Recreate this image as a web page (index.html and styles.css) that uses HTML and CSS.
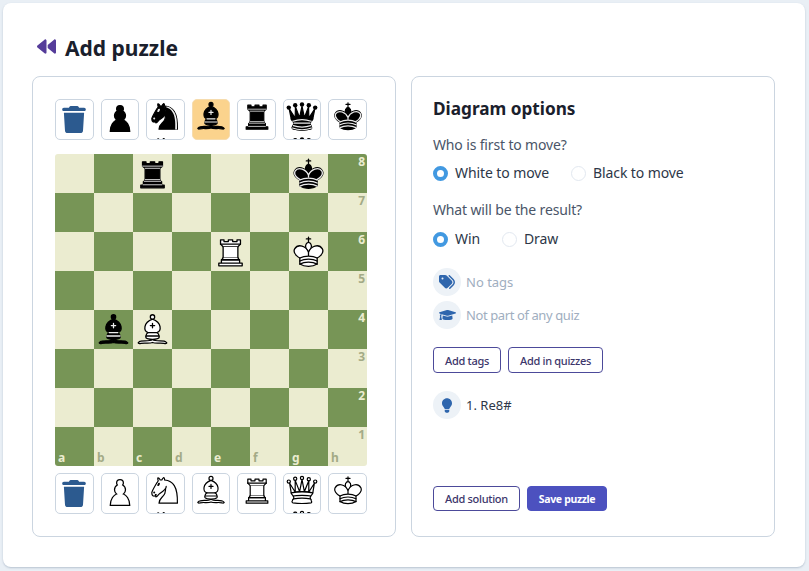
FILE: index.html
```html
<!DOCTYPE html>
<html lang="en">
<head>
<meta charset="utf-8">
<title>Add puzzle</title>
<link rel="stylesheet" href="styles.css">
</head>
<body>
<svg class="defs" width="0" height="0" aria-hidden="true">
  <symbol id="wP" viewBox="0 0 45 45"><path fill="#fff" stroke="#000" stroke-linecap="round" stroke-width="1.5" d="M22.5 9c-2.21 0-4 1.79-4 4 0 .89.29 1.71.78 2.38C17.33 16.5 16 18.59 16 21c0 2.03.94 3.84 2.41 5.03-3 1.06-7.41 5.55-7.41 13.47h23c0-7.92-4.41-12.41-7.41-13.47 1.47-1.19 2.41-3 2.41-5.03 0-2.41-1.33-4.5-3.28-5.62.49-.67.78-1.49.78-2.38 0-2.21-1.79-4-4-4z"/></symbol>
  <symbol id="bP" viewBox="0 0 45 45"><path fill="#000" stroke="#000" stroke-linecap="round" stroke-width="1.5" d="M22.5 9c-2.21 0-4 1.79-4 4 0 .89.29 1.71.78 2.38C17.33 16.5 16 18.59 16 21c0 2.03.94 3.84 2.41 5.03-3 1.06-7.41 5.55-7.41 13.47h23c0-7.92-4.41-12.41-7.41-13.47 1.47-1.19 2.41-3 2.41-5.03 0-2.41-1.33-4.5-3.28-5.62.49-.67.78-1.49.78-2.38 0-2.21-1.79-4-4-4z"/></symbol>
  <symbol id="wN" viewBox="0 0 45 45"><g fill="none" fill-rule="evenodd" stroke="#000" stroke-linecap="round" stroke-linejoin="round" stroke-width="1.5"><path fill="#fff" d="M22 10c10.5 1 16.5 8 16 29H15c0-9 10-6.5 8-21"/><path fill="#fff" d="M24 18c.38 2.91-5.55 7.37-8 9-3 2-2.82 4.34-5 4-1.042-.94 1.41-3.04 0-3-1 0 .19 1.23-1 2-1 0-4.003 1-4-4 0-2 6-12 6-12s1.89-1.9 2-3.5c-.73-.994-.5-2-.5-3 1-1 3 2.5 3 2.5h2s.78-1.992 2.5-3c1 0 1 3 1 3"/><path fill="#000" d="M9.5 25.5a.5.5 0 1 1-1 0 .5.5 0 1 1 1 0zm5.433-9.75a.5 1.5 30 1 1-.866-.5.5 1.5 30 1 1 .866.5z"/></g></symbol>
  <symbol id="bN" viewBox="0 0 45 45"><g fill="none" fill-rule="evenodd" stroke="#000" stroke-linecap="round" stroke-linejoin="round" stroke-width="1.5"><path fill="#000" d="M22 10c10.5 1 16.5 8 16 29H15c0-9 10-6.5 8-21"/><path fill="#000" d="M24 18c.38 2.91-5.55 7.37-8 9-3 2-2.82 4.34-5 4-1.042-.94 1.41-3.04 0-3-1 0 .19 1.23-1 2-1 0-4.003 1-4-4 0-2 6-12 6-12s1.89-1.9 2-3.5c-.73-.994-.5-2-.5-3 1-1 3 2.5 3 2.5h2s.78-1.992 2.5-3c1 0 1 3 1 3"/><path fill="#ececec" stroke="#ececec" d="M9.5 25.5a.5.5 0 1 1-1 0 .5.5 0 1 1 1 0zm5.433-9.75a.5 1.5 30 1 1-.866-.5.5 1.5 30 1 1 .866.5z"/><path fill="#ececec" stroke="none" d="M24.55 10.4l-.45 1.45.5.15c3.15 1 5.65 2.49 7.9 6.75S35.75 29.06 35.25 39l-.05.5h2.25l.05-.5c.5-10.06-.88-16.85-3.25-21.34-2.37-4.49-5.79-6.64-9.19-7.16l-.51-.1z"/></g></symbol>
  <symbol id="wB" viewBox="0 0 45 45"><g fill="none" fill-rule="evenodd" stroke="#000" stroke-linecap="round" stroke-linejoin="round" stroke-width="1.5"><g fill="#fff" stroke-linecap="butt"><path d="M9 36c3.39-.97 10.11.43 13.5-2 3.39 2.43 10.11 1.03 13.5 2 0 0 1.65.54 3 2-.68.97-1.65.99-3 .5-3.39-.97-10.11.46-13.5-1-3.39 1.46-10.11.03-13.5 1-1.354.49-2.323.47-3-.5 1.354-1.94 3-2 3-2z"/><path d="M15 32c2.5 2.5 12.5 2.5 15 0 .5-1.5 0-2 0-2 0-2.5-2.5-4-2.5-4 5.5-1.5 6-11.5-5-15.5-11 4-10.5 14-5 15.5 0 0-2.5 1.5-2.5 4 0 0-.5.5 0 2z"/><path d="M25 8a2.5 2.5 0 1 1-5 0 2.5 2.5 0 1 1 5 0z"/></g><path stroke-linejoin="miter" d="M17.5 26h10M15 30h15m-7.5-14.5v5M20 18h5"/></g></symbol>
  <symbol id="bB" viewBox="0 0 45 45"><g fill="none" fill-rule="evenodd" stroke="#000" stroke-linecap="round" stroke-linejoin="round" stroke-width="1.5"><g fill="#000" stroke-linecap="butt"><path d="M9 36c3.39-.97 10.11.43 13.5-2 3.39 2.43 10.11 1.03 13.5 2 0 0 1.65.54 3 2-.68.97-1.65.99-3 .5-3.39-.97-10.11.46-13.5-1-3.39 1.46-10.11.03-13.5 1-1.354.49-2.323.47-3-.5 1.354-1.94 3-2 3-2z"/><path d="M15 32c2.5 2.5 12.5 2.5 15 0 .5-1.5 0-2 0-2 0-2.5-2.5-4-2.5-4 5.5-1.5 6-11.5-5-15.5-11 4-10.5 14-5 15.5 0 0-2.5 1.5-2.5 4 0 0-.5.5 0 2z"/><path d="M25 8a2.5 2.5 0 1 1-5 0 2.5 2.5 0 1 1 5 0z"/></g><path stroke="#ececec" stroke-linejoin="miter" d="M17.5 26h10M15 30h15m-7.5-14.5v5M20 18h5"/></g></symbol>
  <symbol id="wR" viewBox="0 0 45 45"><g fill="#fff" fill-rule="evenodd" stroke="#000" stroke-linecap="round" stroke-linejoin="round" stroke-width="1.5"><path stroke-linecap="butt" d="M9 39h27v-3H9v3zm3-3v-4h21v4H12zm-1-22V9h4v2h5V9h5v2h5V9h4v5"/><path d="M34 14l-3 3H14l-3-3"/><path stroke-linecap="butt" stroke-linejoin="miter" d="M31 17v12.5H14V17"/><path d="M31 29.5l1.5 2.5h-20l1.5-2.5"/><path fill="none" stroke-linejoin="miter" d="M11 14h23"/></g></symbol>
  <symbol id="bR" viewBox="0 0 45 45"><g fill-rule="evenodd" stroke="#000" stroke-linecap="round" stroke-linejoin="round" stroke-width="1.5"><path stroke-linecap="butt" d="M9 39h27v-3H9v3zm3.5-7l1.5-2.5h17l1.5 2.5h-20zm-.5 4v-4h21v4H12z"/><path stroke-linecap="butt" stroke-linejoin="miter" d="M14 29.5v-13h17v13H14z"/><path stroke-linecap="butt" d="M14 16.5L11 14h23l-3 2.5H14zM11 14V9h4v2h5V9h5v2h5V9h4v5H11z"/><path fill="none" stroke="#ececec" stroke-linejoin="miter" stroke-width="1" d="M12 35.5h21m-20-4h19m-18-2h17m-17-13h17M11 14h23"/></g></symbol>
  <symbol id="wQ" viewBox="0 0 45 45"><g fill="#fff" fill-rule="evenodd" stroke="#000" stroke-linecap="round" stroke-linejoin="round" stroke-width="1.5"><path d="M8 12a2 2 0 1 1-4 0 2 2 0 1 1 4 0zm16.5-4.5a2 2 0 1 1-4 0 2 2 0 1 1 4 0zM41 12a2 2 0 1 1-4 0 2 2 0 1 1 4 0zM16 8.5a2 2 0 1 1-4 0 2 2 0 1 1 4 0zM33 9a2 2 0 1 1-4 0 2 2 0 1 1 4 0z"/><path stroke-linecap="butt" d="M9 26c8.5-1.5 21-1.5 27 0l2-12-7 11V11l-5.5 13.5-3-15-3 15-5.5-14V25L7 14l2 12z"/><path stroke-linecap="butt" d="M9 26c0 2 1.5 2 2.5 4 1 1.5 1 1 .5 3.5-1.5 1-1.5 2.5-1.5 2.5-1.5 1.5.5 2.5.5 2.5 6.5 1 16.5 1 23 0 0 0 1.5-1 0-2.5 0 0 .5-1.5-1-2.5-.5-2.5-.5-2 .5-3.5 1-2 2.5-2 2.5-4-8.5-1.5-18.5-1.5-27 0z"/><path fill="none" d="M11.5 30c3.5-1 18.5-1 22 0M12 33.5c6-1 15-1 21 0"/></g></symbol>
  <symbol id="bQ" viewBox="0 0 45 45"><g fill-rule="evenodd" stroke="#000" stroke-linecap="round" stroke-linejoin="round" stroke-width="1.5"><g stroke="none"><circle cx="6" cy="12" r="2.75"/><circle cx="14" cy="9" r="2.75"/><circle cx="22.5" cy="8" r="2.75"/><circle cx="31" cy="9" r="2.75"/><circle cx="39" cy="12" r="2.75"/></g><path stroke-linecap="butt" d="M9 26c8.5-1.5 21-1.5 27 0l2.5-12.5L31 25l-.3-14.1-5.2 13.6-3-14.5-3 14.5-5.2-13.6L14 25 6.5 13.5 9 26z"/><path stroke-linecap="butt" d="M9 26c0 2 1.5 2 2.5 4 1 1.5 1 1 .5 3.5-1.5 1-1.5 2.5-1.5 2.5-1.5 1.5.5 2.5.5 2.5 6.5 1 16.5 1 23 0 0 0 1.5-1 0-2.5 0 0 .5-1.5-1-2.5-.5-2.5-.5-2 .5-3.5 1-2 2.5-2 2.5-4-8.5-1.5-18.5-1.5-27 0z"/><path fill="none" stroke-linecap="butt" d="M11 38.5a35 35 1 0 0 23 0"/><path fill="none" stroke="#ececec" d="M11 29a35 35 1 0 1 23 0m-21.5 2.5h20m-21 3a35 35 1 0 0 22 0m-23 3a35 35 1 0 0 24 0"/></g></symbol>
  <symbol id="wK" viewBox="0 0 45 45"><g fill="none" fill-rule="evenodd" stroke="#000" stroke-linecap="round" stroke-linejoin="round" stroke-width="1.5"><path stroke-linejoin="miter" d="M22.5 11.63V6M20 8h5"/><path fill="#fff" stroke-linecap="butt" stroke-linejoin="miter" d="M22.5 25s4.5-7.5 3-10.5c0 0-1-2.5-3-2.5s-3 2.5-3 2.5c-1.5 3 3 10.5 3 10.5"/><path fill="#fff" d="M12.5 37c5.5 3.5 14.5 3.5 20 0v-7s9-4.5 6-10.5c-4-6.5-13.5-3.5-16 4V27v-3.5c-2.5-7.5-12-10.5-16-4-3 6 6 10.5 6 10.5v7"/><path d="M12.5 30c5.5-3 14.5-3 20 0m-20 3.5c5.5-3 14.5-3 20 0m-20 3.5c5.5-3 14.5-3 20 0"/></g></symbol>
  <symbol id="bK" viewBox="0 0 45 45"><g fill="none" fill-rule="evenodd" stroke="#000" stroke-linecap="round" stroke-linejoin="round" stroke-width="1.5"><path stroke-linejoin="miter" d="M22.5 11.63V6"/><path fill="#000" stroke-linecap="butt" stroke-linejoin="miter" d="M22.5 25s4.5-7.5 3-10.5c0 0-1-2.5-3-2.5s-3 2.5-3 2.5c-1.5 3 3 10.5 3 10.5"/><path fill="#000" d="M12.5 37c5.5 3.5 14.5 3.5 20 0v-7s9-4.5 6-10.5c-4-6.5-13.5-3.5-16 4V27v-3.5c-2.5-7.5-12-10.5-16-4-3 6 6 10.5 6 10.5v7"/><path stroke-linejoin="miter" d="M20 8h5"/><path stroke="#ececec" d="M32 29.5s8.5-4 6.03-9.65C34.15 14 25 18 22.5 24.5v2.1-2.1C20 18 10.85 14 6.97 19.85 4.5 25.5 13 29.5 13 29.5"/><path stroke="#ececec" d="M12.5 30c5.5-3 14.5-3 20 0m-20 3.5c5.5-3 14.5-3 20 0m-20 3.5c5.5-3 14.5-3 20 0"/></g></symbol>
  <symbol id="trash" viewBox="0 0 448 512"><path d="M135.2 17.7L128 32H32C14.3 32 0 46.3 0 64S14.3 96 32 96H416c17.7 0 32-14.3 32-32s-14.3-32-32-32H320l-7.2-14.3C307.4 6.8 296.3 0 284.2 0H163.8c-12.1 0-23.2 6.8-28.6 17.7zM416 128H32L53.2 467c1.6 25.3 22.6 45 47.9 45H346.9c25.3 0 46.3-19.7 47.9-45L416 128z"/></symbol>
</svg>

<main class="card">
  <h1 class="title">
    <svg class="back" viewBox="0 0 512 512" aria-hidden="true"><path d="M459.5 440.6c9.5 7.9 22.8 9.7 34.1 4.4s18.4-16.6 18.4-29V96c0-12.4-7.2-23.7-18.4-29s-24.5-3.6-34.1 4.4L288 214.3V256v41.7L459.5 440.6zM256 352V256 128 96c0-12.4-7.2-23.7-18.4-29s-24.5-3.6-34.1 4.4l-192 160C4.2 237.5 0 246.5 0 256s4.2 18.5 11.5 24.6l192 160c9.5 7.9 22.8 9.7 34.1 4.4s18.4-16.6 18.4-29V352z"/></svg>
    <span>Add puzzle</span>
  </h1>
  <div class="columns">
    <section class="panel panel-board">
      <div class="palette">
        <div class="tool"><svg class="trash"><use href="#trash"/></svg></div>
        <div class="tool"><svg class="tile tile-lg"><use href="#bP"/></svg></div>
        <div class="tool"><svg class="tile"><use href="#bN"/></svg><svg class="tile"><use href="#bN"/></svg></div>
        <div class="tool tool-on"><svg class="tile"><use href="#bB"/></svg></div>
        <div class="tool"><svg class="tile"><use href="#bR"/></svg></div>
        <div class="tool"><svg class="tile"><use href="#bQ"/></svg><svg class="tile"><use href="#bQ"/></svg></div>
        <div class="tool"><svg class="tile"><use href="#bK"/></svg></div>
      </div>
      <div class="board">
        <div class="sq l"></div><div class="sq d"></div><div class="sq l"><svg class="pc"><use href="#bR"/></svg></div><div class="sq d"></div><div class="sq l"></div><div class="sq d"></div><div class="sq l"><svg class="pc"><use href="#bK"/></svg></div><div class="sq d"><span class="rank">8</span></div>
        <div class="sq d"></div><div class="sq l"></div><div class="sq d"></div><div class="sq l"></div><div class="sq d"></div><div class="sq l"></div><div class="sq d"></div><div class="sq l"><span class="rank">7</span></div>
        <div class="sq l"></div><div class="sq d"></div><div class="sq l"></div><div class="sq d"></div><div class="sq l"><svg class="pc"><use href="#wR"/></svg></div><div class="sq d"></div><div class="sq l"><svg class="pc"><use href="#wK"/></svg></div><div class="sq d"><span class="rank">6</span></div>
        <div class="sq d"></div><div class="sq l"></div><div class="sq d"></div><div class="sq l"></div><div class="sq d"></div><div class="sq l"></div><div class="sq d"></div><div class="sq l"><span class="rank">5</span></div>
        <div class="sq l"></div><div class="sq d"><svg class="pc"><use href="#bB"/></svg></div><div class="sq l"><svg class="pc"><use href="#wB"/></svg></div><div class="sq d"></div><div class="sq l"></div><div class="sq d"></div><div class="sq l"></div><div class="sq d"><span class="rank">4</span></div>
        <div class="sq d"></div><div class="sq l"></div><div class="sq d"></div><div class="sq l"></div><div class="sq d"></div><div class="sq l"></div><div class="sq d"></div><div class="sq l"><span class="rank">3</span></div>
        <div class="sq l"></div><div class="sq d"></div><div class="sq l"></div><div class="sq d"></div><div class="sq l"></div><div class="sq d"></div><div class="sq l"></div><div class="sq d"><span class="rank">2</span></div>
        <div class="sq d"><span class="file">a</span></div><div class="sq l"><span class="file">b</span></div><div class="sq d"><span class="file">c</span></div><div class="sq l"><span class="file">d</span></div><div class="sq d"><span class="file">e</span></div><div class="sq l"><span class="file">f</span></div><div class="sq d"><span class="file">g</span></div><div class="sq l"><span class="file">h</span><span class="rank">1</span></div>
      </div>
      <div class="palette">
        <div class="tool"><svg class="trash"><use href="#trash"/></svg></div>
        <div class="tool"><svg class="tile tile-lg"><use href="#wP"/></svg></div>
        <div class="tool"><svg class="tile"><use href="#wN"/></svg><svg class="tile"><use href="#wN"/></svg></div>
        <div class="tool"><svg class="tile"><use href="#wB"/></svg></div>
        <div class="tool"><svg class="tile"><use href="#wR"/></svg></div>
        <div class="tool"><svg class="tile"><use href="#wQ"/></svg><svg class="tile"><use href="#wQ"/></svg></div>
        <div class="tool"><svg class="tile"><use href="#wK"/></svg></div>
      </div>
    </section>

    <section class="panel panel-options">
      <h2 class="heading">Diagram options</h2>
      <p class="question">Who is first to move?</p>
      <div class="radios">
        <span class="radio"><i class="dot dot-on"></i>White to move</span>
        <span class="radio"><i class="dot"></i>Black to move</span>
      </div>
      <p class="question question-next">What will be the result?</p>
      <div class="radios radios-result">
        <span class="radio"><i class="dot dot-on"></i>Win</span>
        <span class="radio"><i class="dot"></i>Draw</span>
      </div>
      <div class="meta meta-first">
        <span class="bubble"><svg class="ico ico-tag" viewBox="0 0 512 512" aria-hidden="true"><path d="M345 39.1L472.8 168.4c52.4 53 52.4 138.2 0 191.2L360.8 472.9c-9.3 9.4-24.5 9.5-33.9 .2s-9.5-24.5-.2-33.9L438.6 325.9c33.9-34.3 33.9-89.4 0-123.7L310.9 72.9c-9.3-9.4-9.2-24.6 .2-33.9s24.6-9.2 33.9 .2zM0 229.5V80C0 53.5 21.5 32 48 32H197.5c17 0 33.3 6.7 45.3 18.7l168 168c25 25 25 65.5 0 90.5L277.3 442.7c-25 25-65.5 25-90.5 0l-168-168C6.7 262.7 0 246.5 0 229.5zM144 144a32 32 0 1 0 -64 0 32 32 0 1 0 64 0z"/></svg></span>
        <span class="muted">No tags</span>
      </div>
      <div class="meta meta-second">
        <span class="bubble"><svg class="ico ico-cap" viewBox="0 0 640 512" aria-hidden="true"><path d="M622.34 153.2L343.4 67.5c-15.2-4.67-31.6-4.67-46.79 0L17.66 153.2c-23.54 7.23-23.54 38.36 0 45.59l48.63 14.94c-10.67 13.19-17.23 29.28-17.88 46.9C38.78 266.15 32 276.11 32 288c0 10.78 5.68 19.85 13.86 25.65L20.33 428.53C18.11 438.52 25.71 448 35.94 448h56.11c10.24 0 17.84-9.48 15.62-19.47L82.14 313.65C90.32 307.85 96 298.78 96 288c0-11.57-6.47-21.25-15.66-26.87.76-15.02 8.44-28.3 20.69-36.72L296.6 284.5c9.06 2.78 26.44 6.25 46.79 0l278.95-85.7c23.55-7.24 23.55-38.36 0-45.6zM352.79 315.09c-28.53 8.76-52.84 3.92-65.59 0l-145.02-44.55L128 384c0 35.35 85.96 64 192 64s192-28.65 192-64l-14.18-113.47-145.03 44.56z"/></svg></span>
        <span class="muted muted-tight">Not part of any quiz</span>
      </div>
      <div class="actions actions-meta">
        <button class="btn" type="button">Add tags</button>
        <button class="btn" type="button">Add in quizzes</button>
      </div>
      <div class="meta meta-solution">
        <span class="bubble"><svg class="ico ico-bulb" viewBox="0 0 352 512" aria-hidden="true"><path d="M96.06 454.35c.01 6.29 1.87 12.45 5.36 17.69l17.09 25.69a31.99 31.99 0 0 0 26.64 14.28h61.71a31.99 31.99 0 0 0 26.64-14.28l17.09-25.69a31.989 31.989 0 0 0 5.36-17.69l.04-38.35H96.01l.05 38.35zM0 176c0 44.37 16.45 84.85 43.56 115.78 16.52 18.85 42.36 58.23 52.21 91.45.04.26.07.52.11.78h160.24c.04-.26.07-.51.11-.78 9.85-33.22 35.69-72.6 52.21-91.45C335.55 260.85 352 220.37 352 176 352 78.61 272.91-.3 175.45 0 73.44.31 0 82.97 0 176z"/></svg></span>
        <span class="move">1. Re8#</span>
      </div>
      <div class="actions actions-bottom">
        <button class="btn btn-short" type="button">Add solution</button>
        <button class="btn btn-short btn-primary" type="button">Save puzzle</button>
      </div>
    </section>
  </div>
</main>
</body>
</html>
```
FILE: styles.css
```css
* { box-sizing: border-box; }
html, body { margin: 0; padding: 0; }
body {
  width: 809px;
  height: 571px;
  overflow: hidden;
  background: #e9eff5;
  font-family: "Noto Sans", "Liberation Sans", sans-serif;
  color: #1a202c;
  padding: 3px 4px 4px 3px;
}
.defs { position: absolute; }
.card {
  height: 564px;
  background: #fff;
  border-radius: 8px;
  box-shadow: 0 1px 2px rgba(150, 165, 185, 0.6);
  padding: 29px 30px 30px 29px;
  display: flex;
  flex-direction: column;
}
.title {
  margin: 0;
  height: 44px;
  padding: 0 0 0 5px;
  display: flex;
  align-items: flex-start;
  gap: 9px;
  font-size: 21px;
  line-height: 33px;
  font-weight: 700;
  color: #1a202c;
}
.back { width: 19px; height: 19px; margin-top: 5px; fill: #553c9a; }
.columns { flex: 1; display: flex; gap: 15px; }
.panel {
  width: 364px;
  border: 1px solid #cbd5e0;
  border-radius: 8px;
  display: flex;
  flex-direction: column;
}
.panel-board { padding: 22px 28px 22px 22px; }
.panel-options { padding: 20px 21px 25px 21px; }

.palette { width: 312px; height: 41px; display: flex; justify-content: space-between; }
.tool {
  width: 38.5px;
  height: 41px;
  flex: none;
  background: #fff;
  border: 1px solid #cbd5e0;
  border-radius: 5px;
  overflow: hidden;
  display: flex;
  flex-direction: column;
  align-items: center;
}
.tool-on { background: #fbd38d; border-color: #f6dcae; }
.tile { width: 36px; height: 36px; flex: none; margin-top: -2px; margin-bottom: 2px; }
.tile + .tile { margin-top: -3px; }
.tile-lg { width: 38px; height: 38px; }
.trash { width: 24px; height: 27px; flex: none; margin-top: 6px; fill: #2c5a8f; }

.board {
  width: 312px;
  height: 312px;
  margin: 14px 0 7px;
  display: grid;
  grid-template-columns: repeat(8, 39px);
  grid-template-rows: repeat(8, 39px);
  border-radius: 3px;
  overflow: hidden;
}
.sq { position: relative; }
.l { background: #ebecd0; color: #a3aa86; }
.d { background: #779556; color: #ebecd0; }
.pc { display: block; width: 39px; height: 39px; }
.rank, .file {
  position: absolute;
  font-size: 12px;
  line-height: 14px;
  font-weight: 700;
}
.rank { top: 1px; right: 2px; }
.file { bottom: 1px; left: 3px; }

.heading { margin: 0; font-size: 17.2px; line-height: 24px; font-weight: 700; color: #1a202c; }
.question { margin: 14px 0 0; font-size: 14px; line-height: 20px; color: #4a5568; letter-spacing: -.15px; }
.question-next { margin-top: 17px; }
.radios { display: flex; gap: 22px; margin-top: 8px; }
.radios-result { margin-top: 9px; }
.radio { display: flex; align-items: center; gap: 7px; font-size: 14px; line-height: 20px; color: #2d3748; letter-spacing: -.1px; }
.dot {
  width: 15px;
  height: 15px;
  flex: none;
  border-radius: 50%;
  background: #fff;
  border: 1px solid #e2e8f0;
}
.dot-on { background: #fff; border: 4px solid #4299e1; }

.meta { display: flex; align-items: center; gap: 5px; }
.meta-first { margin-top: 19px; }
.meta-second { margin-top: 5px; }
.meta-solution { margin-top: 18px; }
.bubble {
  width: 28px;
  height: 28px;
  flex: none;
  border-radius: 50%;
  background: #edf2f7;
  display: flex;
  align-items: center;
  justify-content: center;
}
.ico { fill: #2f66ad; display: block; }
.ico-tag { width: 18px; height: 16px; }
.ico-cap { width: 17px; height: 14px; }
.ico-bulb { width: 10px; height: 15px; }
.muted { font-size: 13px; color: #a0aec0; }
.muted-tight { letter-spacing: -.4px; }
.move { font-size: 13px; color: #2d3748; }

.actions { display: flex; gap: 7px; }
.actions-meta { margin-top: 18px; }
.actions-bottom { margin-top: auto; }
.btn {
  height: 26px;
  padding: 0 11px;
  font-family: inherit;
  font-size: 11px;
  letter-spacing: -.3px;
  font-weight: 500;
  color: #3c366b;
  background: #fff;
  border: 1px solid #4c4a9a;
  border-radius: 4px;
}
.btn-short { height: 25px; }
.btn-primary { background: #4c51bf; border-color: #4c51bf; color: #fff; font-weight: 700; font-size: 10.5px; letter-spacing: -.35px; }
```
